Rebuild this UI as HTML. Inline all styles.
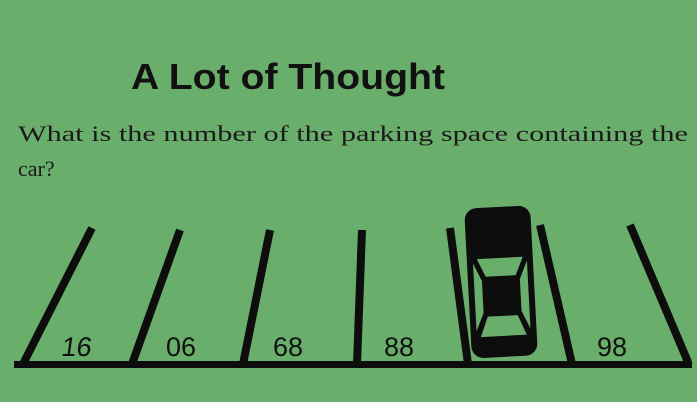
<!DOCTYPE html>
<html><head><style>
body{margin:0;width:697px;height:402px;overflow:hidden;background:#6aae6c;}
svg{display:block}
</style></head><body>
<svg width="697" height="402" viewBox="0 0 697 402">
<rect width="697" height="402" fill="#6aae6c"/>
<text x="288" y="89" text-anchor="middle" font-family="Liberation Sans, sans-serif" font-weight="bold" font-size="36" fill="#111" textLength="314" lengthAdjust="spacingAndGlyphs">A Lot of Thought</text>
<text x="18" y="141" font-family="Liberation Serif, serif" font-size="22" fill="#1a1a1a" textLength="670" lengthAdjust="spacingAndGlyphs">What is the number of the parking space containing the</text>
<text x="18" y="176" font-family="Liberation Serif, serif" font-size="22" fill="#1a1a1a">car?</text>
<g stroke="#0d0d0d" stroke-width="8" stroke-linecap="butt">
<line x1="92" y1="228" x2="22" y2="366"/>
<line x1="180" y1="230" x2="132" y2="364"/>
<line x1="270" y1="230" x2="243" y2="364"/>
<line x1="362" y1="230" x2="357" y2="364"/>
<line x1="450" y1="228" x2="468" y2="364"/>
<line x1="540" y1="225" x2="572" y2="364"/>
<line x1="630" y1="225" x2="688" y2="362"/>
</g>
<rect x="14" y="361" width="678" height="7" fill="#0d0d0d"/>
<g font-family="Liberation Sans, sans-serif" font-size="27" fill="#111">
<text x="62" y="356" transform="skewX(-8)" transform-origin="80 345">16</text>
<text x="166" y="356">06</text>
<text x="273" y="356">68</text>
<text x="384" y="356">88</text>
<text x="597" y="356">98</text>
</g>
<g transform="rotate(-3 500 282)">
<rect x="468" y="207" width="66" height="150" rx="12" fill="#0d0d0d"/>
<path d="M478 258 L524 258 L516 276 L486 276 Z" fill="#6aae6c"/>
<path d="M486 316 L516 316 L524 336 L478 336 Z" fill="#6aae6c"/>
<path d="M474 262 L482 280 L482 312 L474 330 Z" fill="#6aae6c"/>
<path d="M528 262 L520 280 L520 312 L528 330 Z" fill="#6aae6c"/>
</g>
</svg>
</body></html>
